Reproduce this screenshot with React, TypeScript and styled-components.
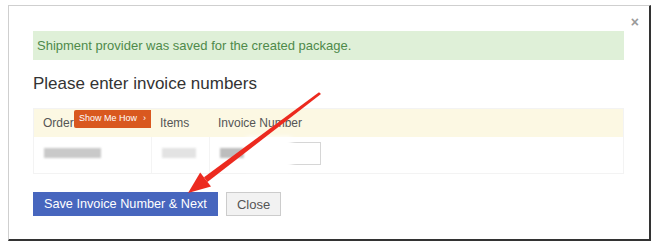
import React from 'react'
import styled, { createGlobalStyle } from 'styled-components'

const GlobalStyle = createGlobalStyle`
  html, body {
    margin: 0;
    padding: 0;
    background: #fff;
  }
  body {
    font-family: 'Liberation Sans', Arial, sans-serif;
  }
`

const Page = styled.div`
  position: relative;
  width: 655px;
  height: 248px;
  padding: 5px 4px 0 8px;
  box-sizing: border-box;
`

const Modal = styled.div`
  position: relative;
  height: 236px;
  box-sizing: border-box;
  border: 1px solid #cfcfcf;
  border-right: 2px solid #333;
  border-bottom: 2px solid #333;
  background: #fff;
  display: flex;
  flex-direction: column;
`

const ModalHeader = styled.div`
  display: flex;
  justify-content: flex-end;
  height: 25px;
  padding: 6px 10px 0 0;
  box-sizing: border-box;
`

const CloseX = styled.button`
  border: none;
  background: transparent;
  padding: 0;
  color: #9a9a9a;
  font-size: 14px;
  font-weight: bold;
  line-height: 14px;
  cursor: pointer;
  font-family: 'Liberation Sans', Arial, sans-serif;
`

const ModalBody = styled.div`
  padding: 0 25px 0 24px;
  display: flex;
  flex-direction: column;
`

const Alert = styled.div`
  height: 29px;
  line-height: 29px;
  background: #dff0d8;
  color: #4e8a4a;
  font-size: 13px;
  padding: 0 4px;
`

const Heading = styled.h4`
  margin: 14px 0 0;
  font-size: 17px;
  line-height: 20px;
  font-weight: normal;
  color: #333;
`

const Table = styled.div`
  margin-top: 14px;
  border: 1px solid #f3f3f3;
  display: grid;
  grid-template-columns: 117px 58px 1fr;
`

const HeadCell = styled.div`
  position: relative;
  height: 28px;
  line-height: 28px;
  background: #fcf8e3;
  color: #555;
  font-size: 12px;
  padding: 0 9px;
`

const Cell = styled.div<{ $sep?: boolean }>`
  position: relative;
  height: 36px;
  padding: 0 10px;
  display: flex;
  align-items: center;
  padding-bottom: 5px;
  box-sizing: border-box;
  border-left: ${({ $sep }) => ($sep ? '1px solid #f4f4f4' : 'none')};
`

const Badge = styled.span`
  position: absolute;
  left: 40px;
  top: 1px;
  height: 18px;
  width: 80px;
  box-sizing: border-box;
  background: #d9581f;
  border-radius: 2px;
  color: #fff;
  font-size: 9px;
  line-height: 16px;
  padding: 0 8px 0 5px;
  display: flex;
  justify-content: space-between;
`

const Blur = styled.span<{ $w: number; $tone: string }>`
  display: block;
  width: ${({ $w }) => $w}px;
  height: 10px;
  background: ${({ $tone }) => $tone};
  filter: blur(0.8px);
`

const InvoiceField = styled.div`
  position: relative;
  display: flex;
  align-items: center;
  width: 100px;
  height: 31px;
`

const Input = styled.div`
  position: absolute;
  left: 40px;
  top: 5px;
  width: 61px;
  height: 23px;
  border: 1px solid #d6d6d6;
  box-sizing: border-box;
`

const WhiteOut = styled.span`
  position: absolute;
  left: 26px;
  top: 0px;
  width: 46px;
  height: 34px;
  background: #fff;
  filter: blur(2.5px);
`

const Actions = styled.div`
  margin-top: 18px;
  display: flex;
  gap: 8px;
`

const Button = styled.button<{ $primary?: boolean }>`
  height: 24px;
  padding: 0 10px;
  font-family: 'Liberation Sans', Arial, sans-serif;
  font-size: ${({ $primary }) => ($primary ? '12.7px' : '13px')};
  border: 1px solid ${({ $primary }) => ($primary ? '#4766be' : '#cccccc')};
  background: ${({ $primary }) => ($primary ? '#4766be' : '#f2f2f2')};
  color: ${({ $primary }) => ($primary ? '#fff' : '#555')};
  cursor: pointer;
`

const ArrowLayer = styled.svg`
  position: absolute;
  left: 0;
  top: 0;
  pointer-events: none;
`

export default function App() {
  return (
    <>
      <GlobalStyle />
      <Page>
        <Modal>
          <ModalHeader>
            <CloseX>×</CloseX>
          </ModalHeader>
          <ModalBody>
            <Alert>Shipment provider was saved for the created package.</Alert>
            <Heading>Please enter invoice numbers</Heading>
            <Table>
              <HeadCell>
                Order
                <Badge>
                  <span>Show Me How</span>
                  <span>›</span>
                </Badge>
              </HeadCell>
              <HeadCell>Items</HeadCell>
              <HeadCell>Invoice Number</HeadCell>
              <Cell>
                <Blur $w={57} $tone="#c9c9c9" />
              </Cell>
              <Cell $sep>
                <Blur $w={34} $tone="#e3e3e3" />
              </Cell>
              <Cell $sep>
                <InvoiceField>
                  <Blur $w={24} $tone="#bdbdbd" />
                  <Input />
                  <WhiteOut />
                </InvoiceField>
              </Cell>
            </Table>
            <Actions>
              <Button $primary>Save Invoice Number &amp; Next</Button>
              <Button>Close</Button>
            </Actions>
          </ModalBody>
        </Modal>
        <ArrowLayer width="655" height="248" viewBox="0 0 655 248">
          <polygon points="321,94 319,92.2 204,177.2 207.4,182" fill="#ec2a1f" />
          <polygon points="188,193 211,186.6 200.2,172.6" fill="#ec2a1f" />
        </ArrowLayer>
      </Page>
    </>
  )
}
